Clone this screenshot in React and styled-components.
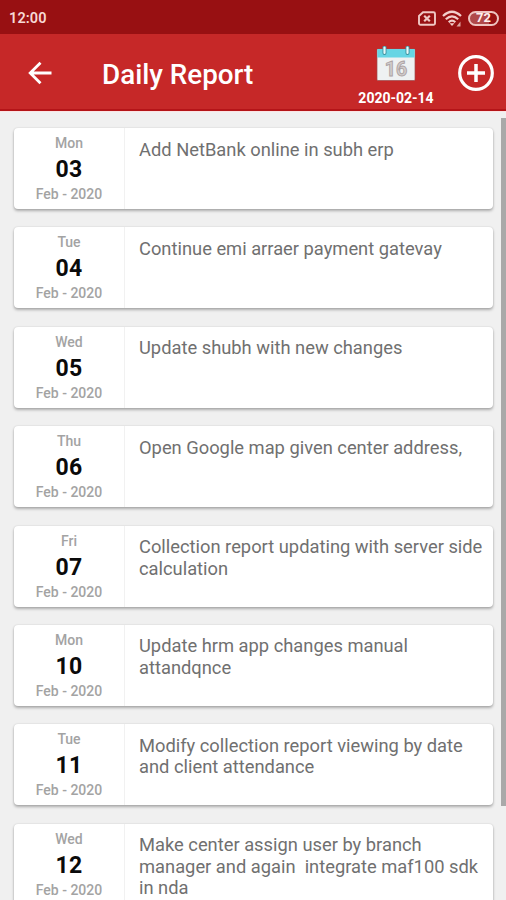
import React from "react";
import styled, { createGlobalStyle } from "styled-components";

const GlobalStyle = createGlobalStyle`
  * { box-sizing: border-box; }
  html, body, #root { height: 100%; }
  body { margin: 0; overflow: hidden; background: #f0f0f0; font-family: Roboto, sans-serif; }
`;

const Screen = styled.div`
  display: flex;
  flex-direction: column;
  width: 506px;
  height: 900px;
  overflow: hidden;
  background: #f0f0f0;
`;

const StatusBar = styled.div`
  display: flex;
  flex: none;
  align-items: center;
  justify-content: space-between;
  height: 34px;
  padding: 2px 7px 0 9px;
  background: #981012;
  color: #f7d9d6;
`;

const Clock = styled.span`
  padding-top: 1px;
  font-size: 14.5px;
  font-weight: 600;
  line-height: 18px;
  letter-spacing: 0.1px;
`;

const StatusIcons = styled.div`
  display: flex;
  align-items: center;
  gap: 6px;
  svg { display: block; }
`;

const Battery = styled.span`
  display: flex;
  align-items: center;
  justify-content: center;
  width: 31px;
  height: 15px;
  border: 2px solid #eec4c0;
  border-radius: 8px;
  background: linear-gradient(90deg, #b0494a 72%, #981012 72%);
  color: #fff0ee;
  font-size: 13px;
  font-weight: 700;
  line-height: 12px;
`;

const AppBar = styled.header`
  display: flex;
  flex: none;
  align-items: center;
  height: 77px;
  padding: 2px 12px 0 26px;
  border-bottom: 2px solid #b41418;
  background: #c62828;
  color: #fff;
`;

const IconButton = styled.button`
  display: flex;
  flex: none;
  padding: 0;
  border: 0;
  background: none;
  color: #fff;
  svg { display: block; }
`;

const Title = styled.h1`
  flex: 1;
  margin: 4px 0 0 48px;
  font-size: 27.8px;
  font-weight: 500;
  line-height: 34px;
`;

const DatePicker = styled.div`
  display: flex;
  flex-direction: column;
  align-items: center;
  width: 78px;
  margin-right: 23px;
  padding-top: 6px;
  svg { display: block; }
`;

const PickedDate = styled.span`
  margin-top: 8px;
  font-size: 14px;
  font-weight: 700;
  line-height: 16px;
  white-space: nowrap;
`;

const Body = styled.main`
  display: flex;
  flex: 1;
  min-height: 0;
  border-top: 1px solid #fbe4e4;
`;

const List = styled.ul`
  display: flex;
  flex: 1;
  flex-direction: column;
  gap: 18.4px;
  min-width: 0;
  margin: 0;
  padding: 16px 8px 0 14px;
  list-style: none;
`;

const Scrollbar = styled.div`
  flex: none;
  width: 5px;
  height: 688px;
  margin-top: 6px;
  background: #a9a9a9;
`;

const Card = styled.li`
  display: flex;
  flex: none;
  height: ${(p) => (p.$tall ? 104 : 81)}px;
  border-radius: 4px;
  background: #fff;
  box-shadow: 0 2px 3px rgba(0, 0, 0, 0.28), 0 0 2px rgba(0, 0, 0, 0.14);
`;

const DateColumn = styled.div`
  display: flex;
  flex: none;
  flex-direction: column;
  align-items: center;
  width: 111px;
  padding-top: 6px;
  border-right: 1px solid #f1f1f1;
`;

const DateCaption = styled.span`
  color: #a3a3a3;
  font-size: 14px;
  font-weight: 500;
  line-height: 18px;
`;

const DayNumber = styled.span`
  padding-top: 2px;
  color: #0a0a0a;
  font-size: 23px;
  font-weight: 700;
  line-height: 31px;
  letter-spacing: 0.3px;
`;

const Task = styled.p`
  margin: 0;
  padding: 10.5px 0 0 14px;
  color: #707070;
  font-size: 18.32px;
  line-height: 21.5px;
  white-space: pre;
`;

const ENTRIES = [
  ["Mon", "03", "Add NetBank online in subh erp"],
  ["Tue", "04", "Continue emi arraer payment gatevay"],
  ["Wed", "05", "Update shubh with new changes"],
  ["Thu", "06", "Open Google map given center address,"],
  ["Fri", "07", "Collection report updating with server side\ncalculation"],
  ["Mon", "10", "Update hrm app changes manual\nattandqnce"],
  ["Tue", "11", "Modify collection report viewing by date\nand client attendance"],
  ["Wed", "12", "Make center assign user by branch\nmanager and again  integrate maf100 sdk\nin nda"],
];

const SimIcon = () => (
  <svg width="18" height="15" viewBox="0 0 18 15" fill="none" stroke="#f0c8c4">
    <path d="M5 1.200h10.500a1.500 1.500 0 0 1 1.500 1.500v9.600a1.500 1.500 0 0 1-1.500 1.500h-13A1.500 1.500 0 0 1 1 12.300V5z" strokeWidth="1.900" />
    <path d="M6.200 4.800l5.600 5.400M11.800 4.800l-5.600 5.400" strokeWidth="2.200" />
  </svg>
);

const WifiIcon = () => (
  <svg width="20" height="17" viewBox="0 0 20 17" fill="none" stroke="#f3cecb" strokeWidth="2.200">
    <path d="M1 6Q10-2.500 19 6" />
    <path d="M3.800 9.200Q10 3.400 16.200 9.200" />
    <path d="M6.700 12.200Q10 9.200 13.300 12.200" />
    <path d="M7.500 13.200h5L10 16z" fill="#f3cecb" stroke="none" />
    <path d="M18.500 11.500v5h-4z" fill="#dfa5a2" stroke="none" />
  </svg>
);

const BackIcon = () => (
  <svg width="28" height="28" viewBox="0 0 28 28" fill="none" stroke="currentColor" strokeWidth="2.800">
    <path d="M25.500 14H4.500M14.500 3.800L4.200 14l10.300 10.200" />
  </svg>
);

const CalendarIcon = () => (
  <svg width="40" height="36" viewBox="0 0 40 36">
    <rect x="1" y="3" width="38" height="31.500" rx="1" fill="#eef1f2" stroke="#9c4a4d" strokeWidth="0.700" />
    <path d="M1.300 3h37.400v8.500H1.300z" fill="#67d5e4" />
    <path d="M8.500 1.500v5.500M31.500 1.500v5.500" stroke="#3c8f9d" strokeWidth="4" strokeLinecap="round" />
    <path d="M8.500 1.500v5.500M31.500 1.500v5.500" stroke="#e6fafa" strokeWidth="2.200" strokeLinecap="round" />
    <text x="20" y="29.500" textAnchor="middle" fontFamily="Roboto, sans-serif" fontSize="19.500" fontWeight="700" fill="#d2cdcd" stroke="#aca3a3" strokeWidth="0.900">16</text>
  </svg>
);

const AddIcon = () => (
  <svg width="36" height="36" viewBox="0 0 36 36" fill="none" stroke="currentColor">
    <circle cx="18" cy="18" r="16.300" strokeWidth="3.200" />
    <path d="M18 9v18M9 18h18" strokeWidth="3.500" />
  </svg>
);

function Entry({ weekday, day, task }) {
  return (
    <Card $tall={task.split("\n").length > 2}>
      <DateColumn>
        <DateCaption>{weekday}</DateCaption>
        <DayNumber>{day}</DayNumber>
        <DateCaption>Feb - 2020</DateCaption>
      </DateColumn>
      <Task>{task}</Task>
    </Card>
  );
}

export default function App() {
  return (
    <>
      <GlobalStyle />
      <Screen>
        <StatusBar>
          <Clock>12:00</Clock>
          <StatusIcons>
            <SimIcon />
            <WifiIcon />
            <Battery>72</Battery>
          </StatusIcons>
        </StatusBar>
        <AppBar>
          <IconButton aria-label="Back"><BackIcon /></IconButton>
          <Title>Daily Report</Title>
          <DatePicker>
            <CalendarIcon />
            <PickedDate>2020-02-14</PickedDate>
          </DatePicker>
          <IconButton aria-label="Add report"><AddIcon /></IconButton>
        </AppBar>
        <Body>
          <List>
            {ENTRIES.map(([weekday, day, task]) => (
              <Entry key={day} weekday={weekday} day={day} task={task} />
            ))}
          </List>
          <Scrollbar />
        </Body>
      </Screen>
    </>
  );
}
